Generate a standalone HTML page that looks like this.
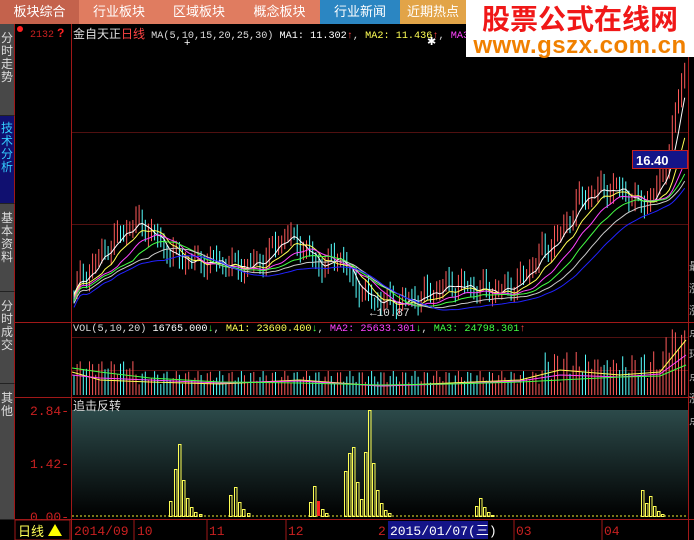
<!DOCTYPE html>
<html><head><meta charset="utf-8"><style>
*{margin:0;padding:0;box-sizing:border-box}
body{width:694px;height:540px;background:#000;overflow:hidden;position:relative;font-family:"Liberation Sans","Noto Sans CJK SC",sans-serif}
.tab{position:absolute;top:0;height:24px;color:#fff;font-size:13px;line-height:24px;text-align:center}
.side{position:absolute;z-index:3;left:0;width:15px;background:#484848;color:#ddd;font-size:12px;line-height:13px;text-align:center;border-right:1px solid #a01818;border-bottom:1px solid #222}
.t{position:absolute;white-space:nowrap;font-family:"Liberation Mono","Noto Sans CJK SC",monospace;font-size:10.2px}
</style></head><body>
<div class="tab" style="left:0;width:79px;background:#c4624c">板块综合</div>
<div class="tab" style="left:79px;width:80px;background:#e07c60">行业板块</div>
<div class="tab" style="left:159px;width:80px;background:#e07c60">区域板块</div>
<div class="tab" style="left:239px;width:81px;background:#e07c60">概念板块</div>
<div class="tab" style="left:320px;width:80px;background:#2b86c2">行业新闻</div>
<div class="tab" style="left:400px;width:66px;background:#e2a448">近期热点</div>

<div class="side" style="top:24px;height:92px;padding-top:8px">分<br>时<br>走<br>势</div>
<div class="side" style="top:116px;height:88px;padding-top:6px;background:#101070;color:#3cf">技<br>术<br>分<br>析</div>
<div class="side" style="top:204px;height:88px;padding-top:8px">基<br>本<br>资<br>料</div>
<div class="side" style="top:292px;height:92px;padding-top:8px">分<br>时<br>成<br>交</div>
<div class="side" style="top:384px;height:136px;padding-top:8px">其<br>他</div>

<svg width="694" height="540" style="position:absolute;left:0;top:0" id="s">
<defs><linearGradient id="g" x1="0" y1="0" x2="0" y2="1"><stop offset="0" stop-color="#2c4a4a"/><stop offset="1" stop-color="#000"/></linearGradient></defs>
<rect x="72" y="410" width="616" height="108" fill="url(#g)"/>
<g stroke="#a01818" stroke-width="1" fill="none">
<line x1="71.5" y1="24" x2="71.5" y2="540"/>
<line x1="688.5" y1="24" x2="688.5" y2="540"/>
<line x1="15" y1="322.5" x2="694" y2="322.5"/>
<line x1="15" y1="397.5" x2="694" y2="397.5"/>
<line x1="15" y1="519.5" x2="694" y2="519.5"/>
</g>
<g stroke="#501010" stroke-width="1">
<line x1="72" y1="132.5" x2="688" y2="132.5"/>
<line x1="72" y1="224.5" x2="688" y2="224.5"/>
<line x1="72" y1="337.5" x2="688" y2="337.5"/>
<line x1="72" y1="370.5" x2="688" y2="370.5"/>
</g>
<g id="c"></g>
<line x1="72" y1="516" x2="688" y2="516" stroke="#ee3" stroke-dasharray="2,2"/>
<g id="ind" fill="none" stroke="#ff5" stroke-width="1"></g>
<rect x="388" y="521" width="100" height="18" fill="#141488"/>
<g fill="#c82020" font-family="Liberation Mono,monospace" font-size="13">
<text x="30" y="415">2.84-</text><text x="30" y="468">1.42-</text><text x="30" y="521">0.00-</text>
<text x="74" y="535">2014/09</text><text x="137" y="535">10</text><text x="209" y="535">11</text><text x="288" y="535">12</text><text x="378" y="535">2</text><text x="516" y="535">03</text><text x="604" y="535">04</text>
</g>
<text x="390" y="535" fill="#fff" font-family="Liberation Mono,Noto Sans CJK SC,monospace" font-size="13">2015/01/07(三)</text>
<g stroke="#a01818"><line x1="134" y1="519" x2="134" y2="540"/><line x1="207" y1="519" x2="207" y2="540"/><line x1="286" y1="519" x2="286" y2="540"/><line x1="514" y1="519" x2="514" y2="540"/><line x1="602" y1="519" x2="602" y2="540"/></g>
<rect x="15" y="520" width="55" height="20" fill="#000" stroke="#a01818"/>
<text x="18" y="536" fill="#ff5" font-size="13" font-family="Noto Sans CJK SC,sans-serif">日线</text>
<polygon points="48,536 55,524 62,536" fill="#ff0"/>
<circle cx="20" cy="29" r="3" fill="#f22"/>
<text x="30" y="37" fill="#c82020" font-size="10" font-family="Liberation Mono,monospace">2132</text>
<text x="57" y="37" fill="#f22" font-size="12" font-weight="bold">?</text>
<text x="184" y="46" fill="#fff" font-size="11">+</text>
<text x="427" y="45" fill="#fff" font-size="11">✱</text>
<text x="370" y="316" fill="#ddd" font-size="11" font-family="Liberation Mono,monospace">←10.87</text>
<rect x="632.5" y="150.5" width="55" height="18" fill="#141488" stroke="#c82020"/>
<text x="636" y="165" fill="#fff" font-size="13" font-weight="bold" font-family="Liberation Sans,sans-serif">16.40</text>
<g fill="#bbb" font-size="11" font-family="Noto Sans CJK SC,sans-serif"><text x="689" y="270">最</text><text x="689" y="292">涨</text><text x="689" y="314">涨</text><text x="689" y="336">点</text><text x="689" y="358">环</text><text x="689" y="380">点</text><text x="689" y="402">涨</text><text x="689" y="424">点</text></g>
</svg>

<div class="t" style="left:73px;top:25px;color:#ddd"><span style="font-family:'Noto Sans CJK SC';font-size:12px">金自天正</span><span style="color:#f44;font-family:'Noto Sans CJK SC';font-size:12px">日线</span> MA(5,10,15,20,25,30) <span style="color:#fff">MA1: 11.302</span><span style="color:#f44">↑</span>, <span style="color:#ff5">MA2: 11.436</span><span style="color:#f44">↑</span>, <span style="color:#f4f">MA3:</span></div>
<div class="t" style="left:73px;top:324px;color:#ddd">VOL(5,10,20) <span style="color:#fff">16765.000</span><span style="color:#4f4">↓</span>, <span style="color:#ff5">MA1: 23600.400</span><span style="color:#4f4">↓</span>, <span style="color:#f4f">MA2: 25633.301</span><span style="color:#4f4">↓</span>, <span style="color:#4f4">MA3: 24798.301</span><span style="color:#f44">↑</span></div>
<div class="t" style="left:73px;top:397px;color:#ddd;font-family:'Noto Sans CJK SC',sans-serif;font-size:12px">追击反转</div>

<div style="position:absolute;left:466px;top:0;width:228px;height:57px;background:#fff;text-align:center">
<div style="color:#f01818;font-size:28px;font-weight:bold;line-height:36px;font-family:'Noto Sans CJK SC',sans-serif">股票公式在线网</div>
<div style="color:#f08000;font-size:24px;font-weight:bold;line-height:19px;font-family:'Liberation Sans',sans-serif;letter-spacing:0.5px">www.gszx.com.cn</div>
</div>

<script>
var NS="http://www.w3.org/2000/svg",c=document.getElementById("c"),ind=document.getElementById("ind");
function el(t,a,p){var e=document.createElementNS(NS,t);for(var k in a)e.setAttribute(k,a[k]);(p||c).appendChild(e);return e}
var A=[[72,292],[90,270],[110,245],[135,222],[150,232],[170,255],[190,262],[215,262],[240,268],[262,262],[285,235],[300,245],[320,268],[340,255],[350,280],[370,300],[400,303],[420,298],[450,285],[480,290],[500,292],[520,282],[540,255],[560,235],[580,200],[600,190],[620,190],[640,205],[655,195],[668,160],[676,110],[684,70]];
function py(x){for(var i=1;i<A.length;i++)if(x<=A[i][0]){var a=A[i-1],b=A[i];return a[1]+(b[1]-a[1])*(x-a[0])/(b[0]-a[0])}return 70}
var xs=[],cl=[];for(var x=74;x<=686;x+=3.1){xs.push(x);cl.push(py(x)+Math.sin(x*1.7)*6+Math.sin(x*0.53)*4)}
for(var i=0;i<xs.length;i++){var o=i?cl[i-1]:cl[i],cc=cl[i],up=cc<o,col=up?"#ff5a5a":"#5ff";var hi=Math.min(o,cc)-4-Math.abs(Math.sin(i*2.3))*8,lo=Math.max(o,cc)+3+Math.abs(Math.cos(i*1.3))*6;
el("line",{x1:xs[i],x2:xs[i],y1:hi,y2:lo,stroke:col});
var v=10+Math.abs(Math.sin(i*0.9))*14+(i<20?10:0)+(i>150?20*Math.abs(Math.sin(i)):0)+(i>190?25:0);el("line",{x1:xs[i],x2:xs[i],y1:395-v,y2:395,stroke:col});}
function ma(n,off){var p="";for(var i=0;i<xs.length;i++){var s=0,k=0;for(var j=Math.max(0,i-n+1);j<=i;j++){s+=cl[j];k++}p+=xs[i]+","+(s/k+off)+" "}return p}
[[5,"#fff",0],[10,"#ff5",2],[15,"#f4f",4],[20,"#4f4",6],[25,"#ccc",9],[30,"#22f",13]].forEach(function(m){el("polyline",{points:ma(m[0],m[2]),fill:"none",stroke:m[1]})});
var vm=[[72,372,375,368],[100,380,378,372],[150,382,380,378],[220,384,383,382],[300,380,381,383],[380,386,386,385],[450,383,384,384],[520,380,381,382],[560,370,375,380],[620,375,377,377],[660,372,374,376],[686,340,355,365]];
["#ff5","#f4f","#4f4"].forEach(function(col,k){var p="";vm.forEach(function(q){p+=q[0]+","+q[k+1]+" "});el("polyline",{points:p,fill:"none",stroke:col})});
var B=[[170,501],[175,469],[179,444],[183,480],[187,498],[191,507],[195,512],[200,514],[230,495],[235,487],[239,502],[243,509],[248,513],[310,502],[314,486],[318,501,1],[322,509],[326,513],[345,471],[349,453],[353,447],[357,482],[361,499],[365,452],[369,410],[373,463],[377,490],[381,503],[385,510],[389,513],[476,506],[480,498],[484,507],[488,512],[492,515],[642,490],[646,503],[650,496],[654,506],[658,511],[662,514]];
B.forEach(function(b){if(b[2])el("rect",{x:b[0]-1,y:b[1],width:3,height:516-b[1],fill:"#f22",stroke:"none"},ind);else el("rect",{x:b[0]-0.5,y:b[1]+0.5,width:2.5,height:516-b[1],},ind)});
</script>
</body></html>
